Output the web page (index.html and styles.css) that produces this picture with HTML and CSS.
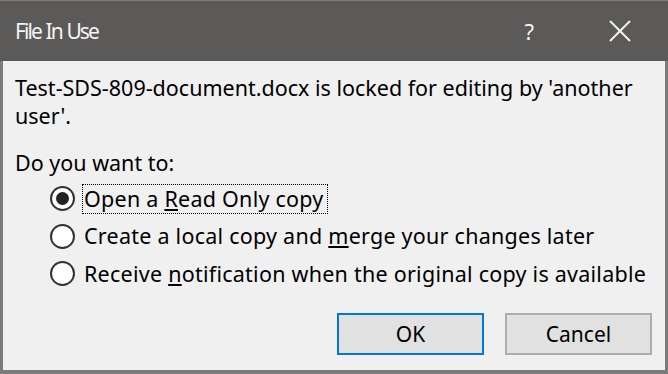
FILE: index.html
```html
<!DOCTYPE html>
<html lang="en">
<head>
  <meta charset="UTF-8" />
  <title>File In Use</title>
  <link rel="stylesheet" href="styles.css">
</head>
<body>
  <div class="dialog">
    <div class="titlebar">
      <span class="title">File In Use</span>
      <span class="help">?</span>
      <span class="close">
        <svg width="22" height="22" viewBox="0 0 22 22">
          <path d="M1 1 L21 21 M21 1 L1 21" stroke="#f2f2f2" stroke-width="2" fill="none" />
        </svg>
      </span>
    </div>

    <div class="content">
      <p class="message">Test-SDS-809-document.docx is locked for editing by 'another user'.</p>
      <p class="prompt">Do you want to:</p>

      <div class="options">
        <label class="option">
          <span class="radio checked"></span>
          <span class="option-text focused">Open a <u>R</u>ead Only copy</span>
        </label>
        <label class="option">
          <span class="radio"></span>
          <span class="option-text">Create a local copy and <u>m</u>erge your changes later</span>
        </label>
        <label class="option">
          <span class="radio"></span>
          <span class="option-text">Receive <u>n</u>otification when the original copy is available</span>
        </label>
      </div>

      <div class="buttons">
        <button class="btn default">OK</button>
        <button class="btn">Cancel</button>
      </div>
    </div>
  </div>
</body>
</html>
```

FILE: styles.css
```css
body {
  margin: 0;
  padding: 0;
  font-family: 'Noto Sans', 'Open Sans', sans-serif;
  background: #f0f0f0;
}

.dialog {
  width: 668px;
  height: 374px;
  display: flex;
  flex-direction: column;
  background: #5b5a58;
}

.titlebar {
  height: 61px;
  display: flex;
  align-items: center;
  padding-left: 15px;
  color: #f4f4f4;
  border-top: 1px solid #7c7b79;
  box-sizing: border-box;
}

.title {
  font-size: 21px;
  flex: 1;
  letter-spacing: -1.9px;
  word-spacing: 1px;
}

.help {
  font-size: 22px;
  margin-right: 75px;
}

.close {
  display: flex;
  margin-right: 37px;
}

.content {
  flex: 1;
  background: #f0f0f0;
  border: 3px solid #7b7b7b;
  border-top: none;
  border-bottom-width: 4px;
  padding: 13px 13px 0 12px;
  color: #000;
  font-size: 21.5px;
  line-height: 28px;
}

.message {
  margin: 0 0 19px;
}

.prompt {
  margin: 0 0 3px;
}

.options {
  display: flex;
  flex-direction: column;
  padding-left: 35px;
}

.option {
  height: 37.5px;
  display: flex;
  align-items: center;
  gap: 7px;
}

.radio {
  width: 21px;
  height: 21px;
  border: 2px solid #333;
  border-radius: 50%;
  background: #fff;
  display: flex;
  align-items: center;
  justify-content: center;
  flex-shrink: 0;
}

.radio.checked::after {
  content: "";
  width: 13px;
  height: 13px;
  border-radius: 50%;
  background: #222;
}

.option-text {
  padding: 0 3px 0 1px;
  line-height: 28px;
  border: 1px solid transparent;
  white-space: nowrap;
  letter-spacing: 0.25px;
}

.option-text.focused {
  border: 1px dotted #000;
}

.buttons {
  display: flex;
  justify-content: flex-end;
  gap: 21px;
  margin-top: 20px;
}

.btn {
  width: 147px;
  height: 42px;
  background: #e1e1e1;
  border: 2px solid #adadad;
  font-family: inherit;
  font-size: 21px;
  color: #000;
  padding: 0;
}

.btn.default {
  border-color: #0078d7;
}
```
